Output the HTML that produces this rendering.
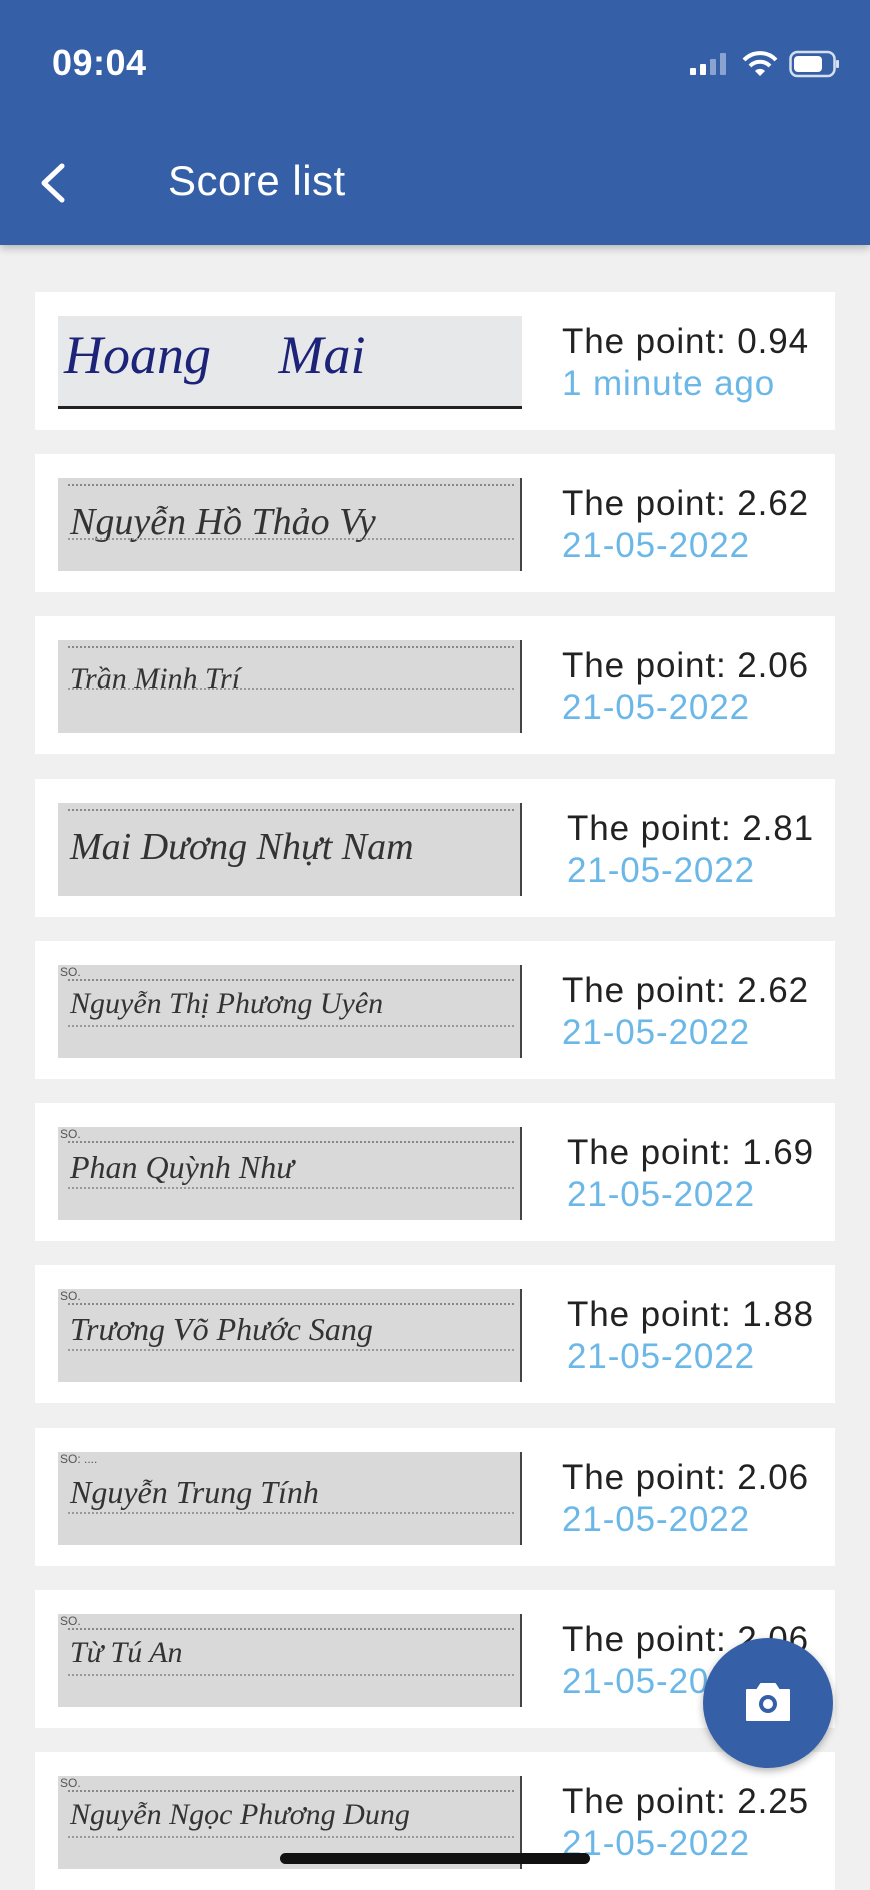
<!DOCTYPE html>
<html><head><meta charset="utf-8"><style>
*{margin:0;padding:0;box-sizing:border-box}
body{width:870px;height:1884px;background:#f0f0f0;font-family:"Liberation Sans",sans-serif;position:relative;overflow:hidden}
.hdr{position:absolute;left:0;top:0;width:870px;height:245px;background:#3560a8;box-shadow:0 3px 8px rgba(0,0,0,.25);color:#fff}
.time{position:absolute;left:52px;top:42px;font-size:36px;font-weight:bold;letter-spacing:.5px}
.title{position:absolute;left:168px;top:157px;font-size:42px;letter-spacing:.5px}
.card{position:absolute;left:35px;width:800px;height:138px;background:#fff}
.img{position:absolute;left:23px;top:24px;width:464px;height:93px;background:#d9d9d9;overflow:hidden;border-right:2px solid #444}
.img .so{position:absolute;left:2px;top:0;font-size:12px;color:#555}
.img .dl{position:absolute;left:10px;right:6px;top:6px;border-top:2px dotted #888}
.img .hw{position:absolute;left:12px;top:22px;font-family:"Liberation Serif",serif;font-style:italic;font-size:38px;color:#333;white-space:nowrap}
.img .bl{position:absolute;left:10px;right:6px;top:60px;border-top:2px dotted #999}
.pt{position:absolute;left:527px;top:30px;font-size:35px;letter-spacing:.9px;color:#222}
.dt{position:absolute;left:527px;top:72px;font-size:35px;letter-spacing:.9px;color:#6ab7e8}
.fab{position:absolute;left:703px;top:1638px;width:130px;height:130px;border-radius:50%;background:#3560a8;box-shadow:0 3px 8px rgba(0,0,0,.3)}
.home{position:absolute;left:280px;top:1853px;width:310px;height:11px;border-radius:6px;background:#111}
</style></head><body>
<div class="hdr">
<div class="time">09:04</div>
<svg style="position:absolute;left:690px;top:52px" width="40" height="24"><rect x="0" y="16" width="6" height="7" rx="1" fill="#fff"/><rect x="10" y="12" width="6" height="11" rx="1" fill="#fff"/><rect x="20" y="7" width="6" height="16" rx="1" fill="#8aa3cf"/><rect x="30" y="1" width="6" height="22" rx="1" fill="#8aa3cf"/></svg>
<svg style="position:absolute;left:742px;top:50px" width="36" height="28" viewBox="0 0 36 28"><path d="M2 10 A22 22 0 0 1 34 10" stroke="#fff" stroke-width="4" fill="none"/><path d="M8 16 A14 14 0 0 1 28 16" stroke="#fff" stroke-width="4" fill="none"/><path d="M13 21 L18 26 L23 21 A7 7 0 0 0 13 21Z" fill="#fff"/></svg>
<svg style="position:absolute;left:789px;top:50px" width="52" height="28"><rect x="1.5" y="2" width="44" height="24" rx="7" stroke="#fff" stroke-width="2.5" fill="none" opacity=".8"/><rect x="5" y="6" width="28" height="16" rx="4" fill="#fff"/><rect x="47" y="10" width="3" height="8" rx="1" fill="#fff" opacity=".8"/></svg>
<svg style="position:absolute;left:36px;top:163px" width="32" height="40"><path d="M26 3 L8 20 L26 37" stroke="#fff" stroke-width="5" fill="none" stroke-linecap="round" stroke-linejoin="round"/></svg>
<div class="title">Score list</div>
</div>

<div class="card" style="top:292px"><div class="img" style="background:#e6e8ea;border-right:none;border-bottom:3px solid #222"><div class="hw" style="color:#1c2378;font-size:54px;top:8px;left:6px">Hoang &nbsp;&nbsp;&nbsp; Mai</div></div><div class="pt">The point: 0.94</div><div class="dt">1 minute ago</div></div>
<div class="card" style="top:454px"><div class="img"><div class="dl"></div><div class="hw">Nguyễn Hồ Thảo Vy</div><div class="bl"></div></div><div class="pt">The point: 2.62</div><div class="dt">21-05-2022</div></div>
<div class="card" style="top:616px"><div class="img"><div class="dl"></div><div class="hw" style="font-size:30px">Trần Minh Trí</div><div class="bl" style="top:48px"></div></div><div class="pt">The point: 2.06</div><div class="dt">21-05-2022</div></div>
<div class="card" style="top:779px"><div class="img"><div class="dl"></div><div class="hw">Mai Dương Nhựt Nam</div></div><div class="pt" style="left:532px">The point: 2.81</div><div class="dt" style="left:532px">21-05-2022</div></div>
<div class="card" style="top:941px"><div class="img"><div class="so">SO.</div><div class="dl" style="top:14px"></div><div class="hw" style="font-size:30px">Nguyễn Thị Phương Uyên</div><div class="bl"></div></div><div class="pt">The point: 2.62</div><div class="dt">21-05-2022</div></div>
<div class="card" style="top:1103px"><div class="img"><div class="so">SO.</div><div class="dl" style="top:14px"></div><div class="hw" style="font-size:32px">Phan Quỳnh Như</div><div class="bl"></div></div><div class="pt" style="left:532px">The point: 1.69</div><div class="dt" style="left:532px">21-05-2022</div></div>
<div class="card" style="top:1265px"><div class="img"><div class="so">SO.</div><div class="dl" style="top:14px"></div><div class="hw" style="font-size:32px">Trương Võ Phước Sang</div><div class="bl"></div></div><div class="pt" style="left:532px">The point: 1.88</div><div class="dt" style="left:532px">21-05-2022</div></div>
<div class="card" style="top:1428px"><div class="img"><div class="so">SO: ....</div><div class="hw" style="font-size:32px">Nguyễn Trung Tính</div><div class="bl"></div></div><div class="pt">The point: 2.06</div><div class="dt">21-05-2022</div></div>
<div class="card" style="top:1590px"><div class="img"><div class="so">SO.</div><div class="dl" style="top:14px"></div><div class="hw" style="font-size:30px">Từ Tú An</div><div class="bl"></div></div><div class="pt">The point: 2.06</div><div class="dt">21-05-2022</div></div>
<div class="card" style="top:1752px"><div class="img"><div class="so">SO.</div><div class="dl" style="top:14px"></div><div class="hw" style="font-size:30px">Nguyễn Ngọc Phương Dung</div><div class="bl"></div></div><div class="pt">The point: 2.25</div><div class="dt">21-05-2022</div></div>

<div class="fab"><svg style="position:absolute;left:40px;top:42px" width="50" height="44" viewBox="0 0 50 44"><path d="M4 10 H14 L18 4 H32 L36 10 H46 V40 H4Z" fill="#fff" stroke="#fff" stroke-width="2" stroke-linejoin="round"/><circle cx="25" cy="24" r="9" fill="#3560a8"/><circle cx="25" cy="24" r="5" fill="#fff"/></svg></div>
<div class="home"></div>
</body></html>
